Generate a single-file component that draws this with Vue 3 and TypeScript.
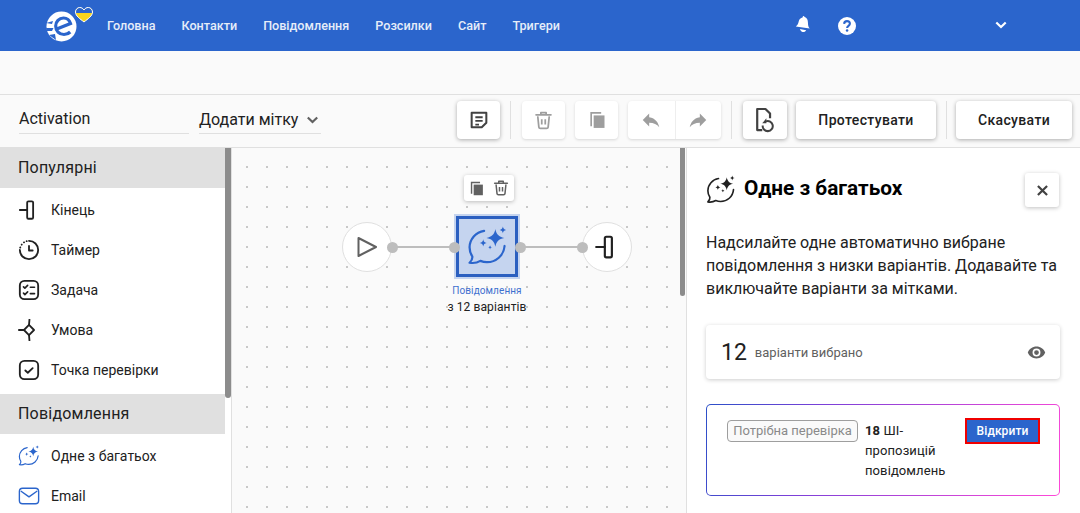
<script setup lang="ts">
const nav: string[] = ['Головна', 'Контакти', 'Повідомлення', 'Розсилки', 'Сайт', 'Тригери']
interface Item { icon: string; label: string; blue?: boolean }
const popular: Item[] = [
  { icon: 'i-end', label: 'Кінець' },
  { icon: 'i-timer', label: 'Таймер' },
  { icon: 'i-task', label: 'Задача' },
  { icon: 'i-cond', label: 'Умова' },
  { icon: 'i-check', label: 'Точка перевірки' },
]
const messages: Item[] = [
  { icon: 'i-spark', label: 'Одне з багатьох', blue: true },
  { icon: 'i-mail', label: 'Email', blue: true },
]
</script>

<template>
  <div class="app">
    <svg class="defs" width="0" height="0" aria-hidden="true">
      <symbol id="i-end" viewBox="0 0 24 24">
        <path d="M2 12h8" fill="none" stroke="currentColor" stroke-width="2" stroke-linecap="round" />
        <rect x="10" y="2.500" width="6.500" height="19" rx="1.400" fill="none" stroke="currentColor" stroke-width="2" />
      </symbol>
      <symbol id="i-timer" viewBox="0 0 24 24">
        <path d="M12 2a10 10 0 1 1-10 10" fill="none" stroke="currentColor" stroke-width="2" stroke-linecap="round" />
        <path d="M2.400 9.400l.1-.2M4 6.200l.1-.1M6.500 3.700l.1-.1M9.400 2.400l.1 0" fill="none" stroke="currentColor" stroke-width="2" stroke-linecap="round" />
        <path d="M12 7.500v5h4" fill="none" stroke="currentColor" stroke-width="2" stroke-linecap="round" stroke-linejoin="round" />
      </symbol>
      <symbol id="i-task" viewBox="0 0 24 24">
        <rect x="2" y="2" width="20" height="20" rx="5" fill="none" stroke="currentColor" stroke-width="2" />
        <path d="M6 8.500l1.500 1.500 3-3M6 15.500l1.500 1.500 3-3M13.500 9h4.500M13.500 16h4.500" fill="none" stroke="currentColor" stroke-width="1.800" stroke-linecap="round" stroke-linejoin="round" />
      </symbol>
      <symbol id="i-cond" viewBox="0 0 24 24">
        <path d="M12 6.500l5.500 5.500-5.500 5.500-5.500-5.500z" fill="none" stroke="currentColor" stroke-width="2" stroke-linejoin="round" />
        <path d="M1 12h5.500M12.500 0.500l-.5 6M12 17.500l.5 6" fill="none" stroke="currentColor" stroke-width="2" stroke-linecap="round" />
      </symbol>
      <symbol id="i-check" viewBox="0 0 24 24">
        <rect x="2" y="2" width="20" height="20" rx="5" fill="none" stroke="currentColor" stroke-width="2" />
        <path d="M8 12.500l2.700 2.500 5.300-5" fill="none" stroke="currentColor" stroke-width="2" stroke-linecap="round" stroke-linejoin="round" />
      </symbol>
      <symbol id="i-spark" viewBox="0 0 24 24">
        <path d="M10 2.800C5.200 3.500 1.500 7.800 1.500 12.500c0 2 .6 3.800 1.600 5.300.2 1.400-.5 2.700-1.600 3.700 2.300.4 4.700-.1 6.300-1.100 1.200.5 2.500.8 3.900.8 5.200 0 9.800-3.800 10.300-9.500" fill="none" stroke="currentColor" stroke-width="1.300" stroke-linecap="round" stroke-linejoin="round" />
        <path d="M16.600 1.800c.6 3.200 2 4.600 5.200 5.200-3.200.6-4.600 2-5.200 5.200-.6-3.200-2-4.600-5.200-5.200 3.200-.6 4.600-2 5.200-5.200zM21 .3c.2 1.200.7 1.800 1.900 2-1.200.2-1.700.8-1.900 2-.2-1.200-.7-1.800-1.900-2 1.200-.2 1.700-.8 1.900-2zM9.500 7.800c.2 1.300.7 1.900 2 2.100-1.300.2-1.800.8-2 2.100-.2-1.300-.7-1.900-2-2.100 1.300-.2 1.800-.8 2-2.100zM13.500 11.200c.2.900.5 1.200 1.300 1.300-.8.100-1.100.4-1.300 1.300-.2-.9-.5-1.200-1.300-1.300.8-.1 1.100-.4 1.300-1.300z" fill="currentColor" />
      </symbol>
      <symbol id="i-mail" viewBox="0 0 24 24">
        <rect x="1.500" y="3.500" width="21" height="17" rx="3.500" fill="none" stroke="currentColor" stroke-width="1.500" />
        <path d="M3 6.500l9 6.500 9-6.500" fill="none" stroke="currentColor" stroke-width="1.500" stroke-linejoin="round" />
      </symbol>
      <symbol id="i-trash" viewBox="0 0 24 24">
        <path d="M9 4.500V3h6v1.500M3.500 5.500h17M5.500 8l1.200 11.500c.1 1 .9 1.500 1.800 1.500h7c.9 0 1.700-.5 1.800-1.500L18.500 8" fill="none" stroke="currentColor" stroke-width="2" stroke-linecap="round" stroke-linejoin="round" />
        <path d="M10 10.500v6M14 10.500v6" fill="none" stroke="currentColor" stroke-width="2" />
      </symbol>
      <symbol id="i-copy" viewBox="0 0 24 24">
        <path d="M4 2.500h13v2H6v15H4z" fill="currentColor" />
        <rect x="8" y="6.500" width="13" height="15" fill="currentColor" />
      </symbol>
    </svg>

    <header class="topbar">
      <svg class="logo" viewBox="0 0 48 36" width="48" height="36">
        <circle cx="15.500" cy="20.500" r="15" fill="#fff" />
        <path d="M0 17l7-2-1 3zM0 22h7.500l-1.500 3H1zM3 29l6-1 1 6z" fill="#2b65cc" />
        <path d="M9.500 23.500l15-6c-1-3.300-3.700-5.500-7-5.500-4.500 0-7.800 3.500-7.800 8 0 4.800 3.500 8.500 8.300 8.500 2.500 0 4.500-.8 6.200-2.500" fill="none" stroke="#2b65cc" stroke-width="3.200" />
        <g transform="translate(0 -4)">
          <path d="M38 20c-4-3.200-8.500-6-8.500-10 0-2.600 2-4.500 4.200-4.500 1.800 0 3.300.9 4.300 2.500 1-1.600 2.500-2.500 4.300-2.500 2.200 0 4.200 1.900 4.200 4.500 0 4-4.500 6.800-8.500 10z" fill="#f7d51d" />
          <path d="M29.500 11c0-3.100 2-5.500 4.200-5.500 1.800 0 3.300.9 4.300 2.500 1-1.600 2.500-2.500 4.300-2.500 2.200 0 4.200 2.400 4.200 5.500z" fill="#2b65cc" />
          <path d="M38 20c-4-3.200-8.500-6-8.500-10 0-2.600 2-4.500 4.200-4.500 1.800 0 3.300.9 4.300 2.500 1-1.600 2.500-2.500 4.300-2.500 2.200 0 4.200 1.900 4.200 4.500 0 4-4.500 6.800-8.500 10z" fill="none" stroke="#fff" stroke-width="1" />
        </g>
      </svg>
      <nav class="nav">
        <a v-for="n in nav" :key="n">{{ n }}</a>
      </nav>
      <div class="top-icons">
        <svg class="bell" viewBox="0 0 20 20" width="18" height="20">
          <path d="M10.500 1c.6 0 1 .5 1 1 3 .9 4 3.500 4 6.500 0 3 .6 5 2 6.500L2 12.800c1.700-1.200 2.700-3 3.300-5.800.5-2.500 2.200-4 4.200-4.300.1-.9.500-1.700 1-1.700z" fill="#fff" />
          <path d="M6.500 15.500l7 1.500c-.8 1.800-3 2.500-4.800 1.500-1-.6-1.800-1.600-2.200-3z" fill="#fff" />
        </svg>
        <svg class="help" viewBox="0 0 20 20" width="18" height="18">
          <circle cx="10" cy="10" r="10" fill="#fff" />
          <path d="M6.800 7.600C6.900 5.700 8.200 4.600 10 4.600c1.900 0 3.200 1.100 3.200 2.800 0 2.400-3.100 2.400-3.100 4.800" fill="none" stroke="#2b65cc" stroke-width="2.300" />
          <circle cx="10.100" cy="15" r="1.400" fill="#2b65cc" />
        </svg>
        <svg class="chev" viewBox="0 0 12 8" width="12" height="8">
          <path d="M1.300 1.500L6 6l4.700-4.500" fill="none" stroke="#fff" stroke-width="2.200" />
        </svg>
      </div>
    </header>

    <div class="subbar"></div>

    <div class="toolbar">
      <div class="field name">Activation</div>
      <div class="field tag">
        <span>Додати мітку</span>
        <svg viewBox="0 0 12 8" width="13" height="8">
          <path d="M1.300 1.500L6 6l4.700-4.500" fill="none" stroke="#616161" stroke-width="2.200" />
        </svg>
      </div>
      <div class="tools">
        <button class="tb">
          <svg viewBox="0 0 24 24" width="22" height="22">
            <path d="M4 4h16v11l-5 5H4z" fill="none" stroke="#424242" stroke-width="2.200" stroke-linejoin="round" />
            <path d="M8 9h8M8 13h8M8 17h4" fill="none" stroke="#424242" stroke-width="2" />
          </svg>
        </button>
        <i class="sep"></i>
        <button class="tb off">
          <svg width="21" height="21"><use href="#i-trash" /></svg>
        </button>
        <button class="tb off">
          <svg width="20" height="20"><use href="#i-copy" /></svg>
        </button>
        <div class="pair off">
          <button class="half">
            <svg viewBox="0 0 24 24" width="22" height="22"><path d="M10 9V5l-7 7 7 7v-4.100c5 0 8.500 1.600 11 5.100-1-5-4-10-11-11z" fill="currentColor" /></svg>
          </button>
          <button class="half">
            <svg viewBox="0 0 24 24" width="22" height="22"><path d="M14 9V5l7 7-7 7v-4.100c-5 0-8.500 1.600-11 5.100 1-5 4-10 11-11z" fill="currentColor" /></svg>
          </button>
        </div>
        <i class="sep"></i>
        <button class="tb hist">
          <svg viewBox="0 0 24 30" width="22" height="28">
            <path d="M9 26H3.500V3h9l5 5v5" fill="none" stroke="#424242" stroke-width="2.400" stroke-linejoin="round" />
            <path d="M13 16.500a5.500 5.500 0 1 1-3.500 4.500" fill="none" stroke="#424242" stroke-width="2.200" />
            <path d="M13.500 13v5.500H9z" fill="#424242" />
          </svg>
        </button>
        <button class="tb text test">Протестувати</button>
        <i class="sep last"></i>
        <button class="tb text cancel">Скасувати</button>
      </div>
    </div>

    <main class="main">
      <aside class="side">
        <div class="sec">Популярні</div>
        <ul class="list">
          <li v-for="it in popular" :key="it.label">
            <svg width="22" height="22"><use :href="'#' + it.icon" /></svg>
            <span>{{ it.label }}</span>
          </li>
        </ul>
        <div class="sec">Повідомлення</div>
        <ul class="list">
          <li v-for="it in messages" :key="it.label" :class="{ blue: it.blue }">
            <svg width="22" height="22"><use :href="'#' + it.icon" /></svg>
            <span>{{ it.label }}</span>
          </li>
        </ul>
        <div class="bar side-bar"></div>
      </aside>

      <section class="canvas">
        <div class="line l1"></div>
        <div class="line l2"></div>
        <div class="round start">
          <svg viewBox="0 0 24 24" width="24" height="24">
            <path d="M3.500 3l17.500 9-17.500 9z" fill="none" stroke="#616161" stroke-width="2" stroke-linejoin="round" />
          </svg>
        </div>
        <div class="round end">
          <svg width="26" height="26"><use href="#i-end" /></svg>
        </div>
        <div class="node">
          <svg width="41" height="41"><use href="#i-spark" /></svg>
        </div>
        <div class="dot d1"></div>
        <div class="dot d2"></div>
        <div class="dot d3"></div>
        <div class="dot d4"></div>
        <div class="pop">
          <svg width="17" height="17"><use href="#i-copy" /></svg>
          <svg width="18" height="18"><use href="#i-trash" /></svg>
        </div>
        <div class="cap">
          <div class="cap1">Повідомлення</div>
          <div class="cap2">з 12 варіантів</div>
        </div>
        <div class="bar canvas-bar"></div>
      </section>

      <aside class="panel">
        <div class="p-head">
          <svg width="30" height="30"><use href="#i-spark" /></svg>
          <h2>Одне з багатьох</h2>
          <button class="close">
            <svg viewBox="0 0 12 12" width="11" height="11">
              <path d="M1 1l10 10M11 1L1 11" fill="none" stroke="#424242" stroke-width="2.400" />
            </svg>
          </button>
        </div>
        <p class="desc">Надсилайте одне автоматично вибране повідомлення з низки варіантів. Додавайте та виключайте варіанти за мітками.</p>
        <div class="count">
          <b>12</b>
          <span>варіанти вибрано</span>
          <svg viewBox="0 0 24 24" width="19" height="19">
            <path d="M12 4.500C7 4.500 2.700 7.600 1 12c1.700 4.400 6 7.500 11 7.500s9.300-3.100 11-7.500c-1.700-4.400-6-7.500-11-7.500zM12 17a5 5 0 1 1 0-10 5 5 0 0 1 0 10zm0-8a3 3 0 1 0 0 6 3 3 0 0 0 0-6z" fill="#616161" />
          </svg>
        </div>
        <div class="ai">
          <div class="ai-in">
            <span class="badge">Потрібна перевірка</span>
            <div class="ai-text"><b>18</b> ШІ-пропозицій повідомлень</div>
            <button class="open">Відкрити</button>
          </div>
        </div>
      </aside>
    </main>
  </div>
</template>

<style scoped>
.app {
  height: 513px;
  overflow: hidden;
  display: flex;
  flex-direction: column;
  background: #fafafa;
  font-family: Roboto, "Noto Sans", sans-serif;
  color: #212121;
}
.defs { position: absolute; }
button { font-family: inherit; cursor: pointer; }

.topbar {
  height: 51px;
  flex: none;
  background: #2b65cc;
  display: flex;
  align-items: center;
  padding-left: 46px;
}
.logo { flex: none; margin-top: -4px; }
.nav {
  display: flex;
  gap: 26px;
  margin-left: 13px;
  font-size: 12.600px;
  font-weight: 500;
  color: #e6edf9;
}
.top-icons {
  margin-left: auto;
  display: flex;
  align-items: center;
  padding-right: 73px;
}
.bell { margin-top: -4px; }
.help { margin-left: 26px; }
.chev { margin-left: 139px; margin-top: -2px; }

.subbar { height: 43px; flex: none; border-bottom: 1px solid #e0e0e0; }

.toolbar {
  height: 53px;
  flex: none;
  box-sizing: border-box;
  border-bottom: 1px solid #e0e0e0;
  display: flex;
  align-items: flex-start;
  padding: 6px 8px 0 19px;
}
.field {
  height: 30px;
  box-sizing: border-box;
  border-bottom: 1px solid #e0e0e0;
  font-size: 16px;
  display: flex;
  align-items: center;
  margin-top: 3px;
  white-space: nowrap;
  flex: none;
}
.name { width: 170px; }
.tag { width: 122px; margin-left: 10px; gap: 8px; padding-top: 1px; }
.tag svg { margin-top: 2px; }
.tools { margin-left: auto; display: flex; align-items: center; }
.tb {
  height: 38px;
  width: 43px;
  padding: 0;
  border: none;
  background: #fff;
  border-radius: 4px;
  box-shadow: 0 1px 4px rgba(0,0,0,.32);
  display: flex;
  align-items: center;
  justify-content: center;
  color: #212121;
}
.tb + .tb { margin-left: 10px; }
.tb.off { color: #9e9e9e; box-shadow: 0 1px 3px rgba(0,0,0,.14); }
.hist { width: 44px; }
.tb.text { font-size: 14px; font-weight: 500; letter-spacing: .35px; }
.tb.test { width: 140px; margin-left: 9px; }
.cancel { width: 116px; }
.sep { width: 1px; height: 38px; background: #e0e0e0; margin: 0 11px 0 10px; }
.sep.last { margin: 0 9px 0 10px; }
.pair {
  display: flex;
  margin-left: 10px;
  background: #fff;
  border-radius: 4px;
  box-shadow: 0 1px 3px rgba(0,0,0,.14);
  color: #9e9e9e;
}
.half {
  width: 46.500px;
  height: 38px;
  border: none;
  padding: 0;
  background: none;
  color: inherit;
  display: flex;
  align-items: center;
  justify-content: center;
}
.half + .half { border-left: 1px solid #eeeeee; }

.main { flex: 1; min-height: 0; display: flex; }

.side {
  position: relative;
  width: 232px;
  flex: none;
  box-sizing: border-box;
  background: #fff;
  border-right: 1px solid #e0e0e0;
  padding-right: 6px;
}
.sec {
  height: 40px;
  line-height: 40px;
  background: #e0e0e0;
  padding-left: 18px;
  font-size: 16px;
  letter-spacing: .2px;
}
.list { list-style: none; margin: 0; padding: 2px 0 4px; }
.list li {
  height: 40px;
  display: flex;
  align-items: center;
  gap: 11px;
  padding-left: 18px;
  font-size: 14px;
  color: #212121;
}
.list li.blue svg { color: #2b65cc; }
.bar { position: absolute; top: 0; width: 6px; background: #8c8c8c; border-radius: 0 0 3px 3px; }
.side-bar { left: 225px; height: 250px; }
.canvas-bar { left: 448px; height: 148px; width: 5px; }

.canvas {
  position: relative;
  width: 454px;
  flex: none;
  background-color: #fafafa;
  background-image: radial-gradient(circle at 1px 1px, #a0a0a0 0.55px, transparent 0.9px);
  background-size: 20px 20px;
  background-position: -6px 18px;
}
.round {
  position: absolute;
  top: 74px;
  width: 48px;
  height: 48px;
  border: 1px solid #e0e0e0;
  border-radius: 50%;
  background: #fff;
  display: flex;
  align-items: center;
  justify-content: center;
}
.start { left: 110px; color: #616161; }
.end { left: 350px; color: #212121; }
.node {
  position: absolute;
  left: 222px;
  top: 66px;
  width: 66px;
  height: 65px;
  box-sizing: border-box;
  background: #c5d4ef;
  outline: 3px solid #2b5fc0;
  outline-offset: -5px;
  display: flex;
  align-items: center;
  justify-content: center;
  color: #2b65cc;
}
.dot {
  position: absolute;
  top: 93.500px;
  width: 11px;
  height: 11px;
  border-radius: 50%;
  background: #bdbdbd;
}
.d1 { left: 154.500px; }
.d2 { left: 216.500px; }
.d3 { left: 282.500px; }
.d4 { left: 344.500px; }
.line { position: absolute; top: 98px; height: 2px; background: #bdbdbd; }
.l1 { left: 160px; width: 62px; }
.l2 { left: 288px; width: 62px; }
.pop {
  position: absolute;
  left: 232px;
  top: 27px;
  width: 50px;
  height: 26px;
  background: #fff;
  border-radius: 3px;
  box-shadow: 0 1px 4px rgba(0,0,0,.25);
  display: flex;
  align-items: center;
  justify-content: center;
  gap: 7px;
  color: #616161;
}
.cap {
  position: absolute;
  left: 175px;
  top: 136px;
  width: 160px;
  text-align: center;
}
.cap1 { font-size: 10px; line-height: 14px; color: #3f70cf; letter-spacing: .1px; }
.cap2 { font-size: 12px; line-height: 18px; color: #212121; letter-spacing: .1px; }

.panel {
  flex: 1;
  box-sizing: border-box;
  background: #fff;
  border-left: 1px solid #e0e0e0;
  padding: 25px 20px 0 19px;
  min-width: 0;
}
.p-head { display: flex; align-items: center; height: 34px; color: #212121; }
.p-head h2 { margin: -4px 0 0 8px; font-size: 20.800px; font-weight: 700; color: #000; flex: 1; }
.close {
  width: 34px;
  height: 34px;
  border: none;
  background: #fff;
  border-radius: 3px;
  box-shadow: 0 1px 4px rgba(0,0,0,.25);
  display: flex;
  align-items: center;
  justify-content: center;
  padding: 0;
  margin-right: 1px;
}
.desc {
  margin: 24px 0 0;
  font-size: 16px;
  line-height: 23px;
  color: #212121;
}
.count {
  margin-top: 25px;
  height: 54px;
  border-radius: 4px;
  background: #fff;
  box-shadow: 0 1px 4px rgba(0,0,0,.2);
  display: flex;
  align-items: center;
  padding: 0 14px 0 15px;
}
.count b { font-size: 23px; font-weight: 400; color: #212121; }
.count span { margin-left: 8px; font-size: 13px; color: #616161; flex: 1; }
.ai {
  margin-top: 25px;
  height: 92px;
  box-sizing: border-box;
  padding: 1px;
  border-radius: 5px;
  background: linear-gradient(110deg, #2b50c8, #7a40d8 30%, #ff48d8);
}
.ai-in {
  height: 100%;
  box-sizing: border-box;
  background: #fff;
  border-radius: 4px;
  display: flex;
  align-items: flex-start;
  padding: 15px 19px 0 20px;
}
.badge {
  flex: none;
  box-sizing: border-box;
  height: 22px;
  width: 131px;
  border: 1px solid #9e9e9e;
  border-radius: 4px;
  background: #fafafa;
  font-size: 13px;
  line-height: 20px;
  text-align: center;
  color: #8a8a8a;
}
.ai-text {
  margin: 1px 0 0 7px;
  width: 92px;
  font-size: 13px;
  line-height: 20px;
  letter-spacing: .1px;
  color: #212121;
}
.open {
  flex: none;
  margin-left: auto;
  margin-top: -2px;
  width: 75px;
  height: 26px;
  box-sizing: border-box;
  border: 2px solid #f00000;
  background: #2b65cc;
  color: #fff;
  font-size: 12px;
  font-weight: 500;
  letter-spacing: .1px;
  padding: 0;
}
</style>

<style>
html, body { margin: 0; padding: 0; background: #fafafa; }
</style>
